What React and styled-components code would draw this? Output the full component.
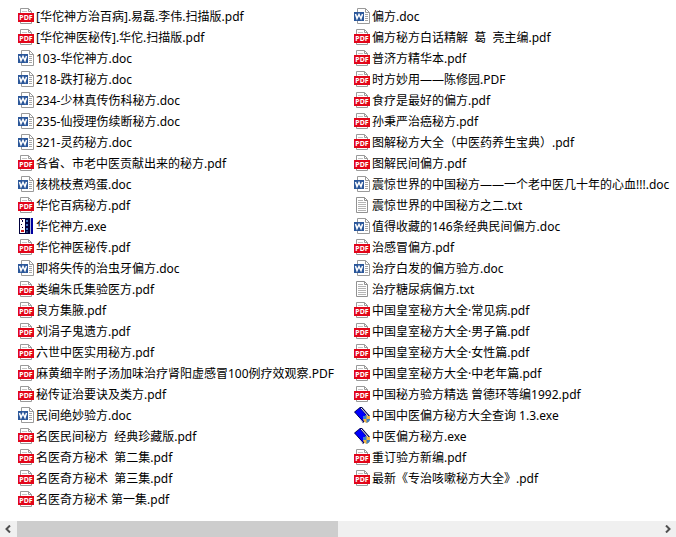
import React from "react";
import styled, { createGlobalStyle } from "styled-components";

const GlobalStyle = createGlobalStyle`
  * {
    box-sizing: border-box;
  }

  body {
    margin: 0;
    background: #fff;
    color: #000;
    font-family: "Noto Sans", "Noto Sans CJK SC", sans-serif;
    font-size: 12px;
  }
`;

const Window = styled.main`
  display: flex;
  flex-direction: column;
  min-height: 100vh;
  overflow: hidden;
`;

const FileList = styled.ul`
  flex: 1;
  display: grid;
  grid-auto-flow: column;
  grid-template-rows: repeat(24, 21px);
  grid-template-columns: 336px auto;
  justify-content: start;
  margin: 0;
  padding: 6px 0 0 18px;
  list-style: none;
`;

const FileItem = styled.li`
  display: flex;
  align-items: flex-start;
  gap: 2px;
  padding-top: 2px;
  line-height: 18px;
  white-space: pre;
`;

const Icon = styled.svg`
  flex: none;
  width: 16px;
  height: 16px;
`;

const IconText = styled.text`
  fill: #fff;
  font-family: "Noto Sans", sans-serif;
  font-size: 7px;
  font-weight: 700;
  text-anchor: middle;
`;

const ScrollBar = styled.div`
  display: flex;
  height: 16px;
  background: #f0f0f0;
`;

const ScrollButton = styled.button`
  display: flex;
  align-items: center;
  justify-content: center;
  width: 17px;
  padding: 0;
  border: 0;
  background: #f0f0f0;
`;

const Track = styled.div`
  flex: 1;
`;

const Thumb = styled.div`
  width: 50%;
  height: 100%;
  background: #cdcdcd;
`;

const PdfIcon = () => (
  <Icon viewBox="0 0 16 16" aria-hidden="true">
    <path d="M2.5 15.5V.5h8l3 3v12z" fill="#fff" stroke="#9a9a9a" />
    <path d="M10.5 .5v3h3" fill="none" stroke="#9a9a9a" />
    <path d="M4 3.5h5" stroke="#c4c4c4" />
    <path d="M0 5h16v9H0z" fill="#e2061a" />
    <IconText x="8" y="12">
      PDF
    </IconText>
  </Icon>
);

const DocIcon = () => (
  <Icon viewBox="0 0 16 16" aria-hidden="true">
    <path d="M3.5 15.5V.5h8l4 4v11z" fill="#fff" stroke="#9a9a9a" />
    <path d="M11.5 .5v4h4" fill="none" stroke="#9a9a9a" />
    <path d="M11 6.5h3M11 8.5h3M11 10.5h3M11 12.5h3" stroke="#a6a6a6" />
    <path d="M0 4h10v9H0z" fill="#2b579a" />
    <path
      d="M1.5 6l1.500 4.500L5 6.500l2 4L8.500 6"
      fill="none"
      stroke="#fff"
      strokeWidth="1.5"
    />
  </Icon>
);

const TxtIcon = () => (
  <Icon viewBox="0 0 16 16" aria-hidden="true">
    <path d="M2.5 15.5V.5h8l3 3v12z" fill="#fff" stroke="#919191" />
    <path d="M10.5 .5v3h3" fill="none" stroke="#919191" />
    <path
      d="M4 3.5h5M4 5.5h8M4 7.5h8M4 9.5h8M4 11.5h8M4 13.5h8"
      stroke="#b4b4b4"
    />
  </Icon>
);

const BoxIcon = () => (
  <Icon viewBox="0 0 16 16" shapeRendering="crispEdges" aria-hidden="true">
    <path d="M1 0h14v16H1z" fill="#00003c" />
    <path d="M2 1h5v14H2z" fill="#fff" />
    <path d="M4 2h1v2H4zM3 6h1v1H3zM4 9h1v1H4z" fill="#00003c" />
    <path d="M3 1h1v1H3zM3 12h3v2H3z" fill="#d01818" />
    <path d="M8 2h2v2H8zM8 6h2v2H8zM8 10h2v2H8z" fill="#4678be" />
    <path d="M8 13h2v2H8z" fill="#2a3f78" />
    <path d="M12 0h1v16h-1z" fill="#b4bce0" />
    <path d="M13 0h2v16h-2z" fill="#0000a0" />
  </Icon>
);

const BookIcon = () => (
  <Icon viewBox="0 0 16 16" aria-hidden="true">
    <path d="M0 5l6-5h2l8 9-7 7z" fill="#000050" />
    <path d="M1 5l5-4 7.500 9-4.500 4z" fill="#0000ff" />
    <path d="M7 1l7.500 8.500" stroke="#fff" />
    <path d="M.8 6.500L8.500 15" stroke="#fff" />
    <path
      d="M12.500 8c1 1 2 1 3.500 1v2.500c0 2-1.500 3.500-3.500 4.500C10.500 15 9 13.500 9 11.500V9c1.500 0 2.500 0 3.500-1z"
      fill="#f5b93c"
    />
    <path d="M12.500 8v4H9V9c1.500 0 2.500 0 3.500-1z" fill="#3f80c4" />
    <path d="M12.500 12H16c0 2-1.500 3-3.500 4z" fill="#3f80c4" />
  </Icon>
);

const icons = {
  pdf: PdfIcon,
  doc: DocIcon,
  txt: TxtIcon,
  box: BoxIcon,
  book: BookIcon,
};

const files = [
  ["pdf", "[华佗神方治百病].易磊.李伟.扫描版.pdf"],
  ["pdf", "[华佗神医秘传].华佗.扫描版.pdf"],
  ["doc", "103-华佗神方.doc"],
  ["doc", "218-跌打秘方.doc"],
  ["doc", "234-少林真传伤科秘方.doc"],
  ["doc", "235-仙授理伤续断秘方.doc"],
  ["doc", "321-灵药秘方.doc"],
  ["pdf", "各省、市老中医贡献出来的秘方.pdf"],
  ["doc", "核桃枝煮鸡蛋.doc"],
  ["pdf", "华佗百病秘方.pdf"],
  ["box", "华佗神方.exe"],
  ["pdf", "华佗神医秘传.pdf"],
  ["doc", "即将失传的治虫牙偏方.doc"],
  ["pdf", "类编朱氏集验医方.pdf"],
  ["pdf", "良方集腋.pdf"],
  ["pdf", "刘涓子鬼遗方.pdf"],
  ["pdf", "六世中医实用秘方.pdf"],
  ["pdf", "麻黄细辛附子汤加味治疗肾阳虚感冒100例疗效观察.PDF"],
  ["pdf", "秘传证治要诀及类方.pdf"],
  ["doc", "民间绝妙验方.doc"],
  ["pdf", "名医民间秘方  经典珍藏版.pdf"],
  ["pdf", "名医奇方秘术  第二集.pdf"],
  ["pdf", "名医奇方秘术  第三集.pdf"],
  ["pdf", "名医奇方秘术 第一集.pdf"],
  ["doc", "偏方.doc"],
  ["pdf", "偏方秘方白话精解  葛  亮主编.pdf"],
  ["pdf", "普济方精华本.pdf"],
  ["pdf", "时方妙用——陈修园.PDF"],
  ["pdf", "食疗是最好的偏方.pdf"],
  ["pdf", "孙秉严治癌秘方.pdf"],
  ["pdf", "图解秘方大全（中医药养生宝典）.pdf"],
  ["pdf", "图解民间偏方.pdf"],
  ["doc", "震惊世界的中国秘方——一个老中医几十年的心血!!!.doc"],
  ["txt", "震惊世界的中国秘方之二.txt"],
  ["doc", "值得收藏的146条经典民间偏方.doc"],
  ["pdf", "治感冒偏方.pdf"],
  ["doc", "治疗白发的偏方验方.doc"],
  ["txt", "治疗糖尿病偏方.txt"],
  ["pdf", "中国皇室秘方大全·常见病.pdf"],
  ["pdf", "中国皇室秘方大全·男子篇.pdf"],
  ["pdf", "中国皇室秘方大全·女性篇.pdf"],
  ["pdf", "中国皇室秘方大全·中老年篇.pdf"],
  ["pdf", "中国秘方验方精选 曾德环等编1992.pdf"],
  ["book", "中国中医偏方秘方大全查询 1.3.exe"],
  ["book", "中医偏方秘方.exe"],
  ["pdf", "重订验方新编.pdf"],
  ["pdf", "最新《专治咳嗽秘方大全》.pdf"],
];

const File = ({ type, name }) => {
  const TypeIcon = icons[type];

  return (
    <FileItem>
      <TypeIcon />
      <span>{name}</span>
    </FileItem>
  );
};

const App = () => (
  <Window>
    <GlobalStyle />
    <FileList lang="zh-CN">
      {files.map(([type, name]) => (
        <File key={name} type={type} name={name} />
      ))}
    </FileList>
    <ScrollBar>
      <ScrollButton aria-label="Scroll left">
        <svg width="9" height="8" viewBox="0 0 9 8">
          <path d="M6 .5L2.500 4 6 7.500" fill="none" stroke="#505050" strokeWidth="2" />
        </svg>
      </ScrollButton>
      <Track>
        <Thumb />
      </Track>
      <ScrollButton aria-label="Scroll right">
        <svg width="9" height="8" viewBox="0 0 9 8">
          <path d="M3 .5L6.500 4 3 7.500" fill="none" stroke="#505050" strokeWidth="2" />
        </svg>
      </ScrollButton>
    </ScrollBar>
  </Window>
);

export default App;
